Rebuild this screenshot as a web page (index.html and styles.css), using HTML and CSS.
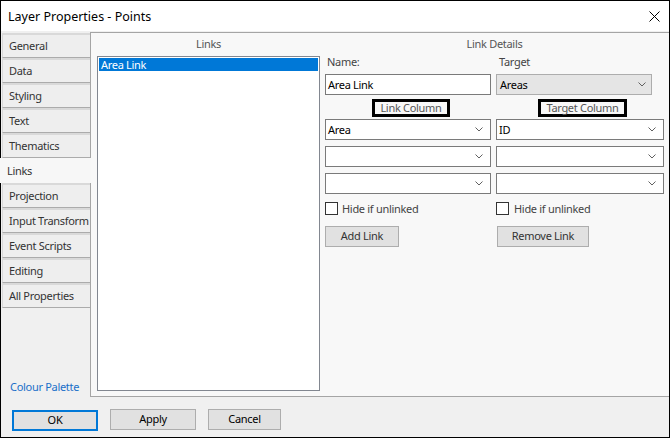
FILE: index.html
```html
<!DOCTYPE html>
<html>
<head>
<meta charset="utf-8">
<link rel="stylesheet" href="styles.css">
</head>
<body>
<div class="window">
  <div class="titlebar">
    <span class="title">Layer Properties - Points</span>
    <svg class="close" width="11" height="11" viewBox="0 0 11 11"><path d="M0.5 0.5 L10.5 10.5 M10.5 0.5 L0.5 10.5" stroke="#000" stroke-width="1" fill="none"/></svg>
  </div>
  <div class="main">
    <div class="sidebar">
      <div class="tab">General</div>
      <div class="tab">Data</div>
      <div class="tab">Styling</div>
      <div class="tab">Text</div>
      <div class="tab">Thematics</div>
      <div class="tab active">Links</div>
      <div class="tab">Projection</div>
      <div class="tab">Input Transform</div>
      <div class="tab">Event Scripts</div>
      <div class="tab">Editing</div>
      <div class="tab">All Properties</div>
      <div class="palette">Colour Palette</div>
    </div>
    <div class="panel">
      <div class="links-col">
        <div class="heading">Links</div>
        <div class="listbox">
          <div class="item selected">Area Link</div>
        </div>
      </div>
      <div class="details">
        <div class="heading">Link Details</div>
        <div class="cols">
          <div class="col">
            <div class="label name-label">Name:</div>
            <div class="textbox">Area Link</div>
            <div class="boxed link-box">Link Column</div>
            <div class="select"><span>Area</span><svg class="chev" width="8" height="5" viewBox="0 0 8 5"><path d="M0.5 0.5 L4 4 L7.5 0.5" stroke="#606060" fill="none"/></svg></div>
            <div class="select"><span></span><svg class="chev" width="8" height="5" viewBox="0 0 8 5"><path d="M0.5 0.5 L4 4 L7.5 0.5" stroke="#606060" fill="none"/></svg></div>
            <div class="select"><span></span><svg class="chev" width="8" height="5" viewBox="0 0 8 5"><path d="M0.5 0.5 L4 4 L7.5 0.5" stroke="#606060" fill="none"/></svg></div>
            <div class="check"><span class="cb"></span><span>Hide if unlinked</span></div>
            <div class="button add">Add Link</div>
          </div>
          <div class="col">
            <div class="label target-label">Target</div>
            <div class="select combo"><span>Areas</span><svg class="chev" width="8" height="5" viewBox="0 0 8 5"><path d="M0.5 0.5 L4 4 L7.5 0.5" stroke="#606060" fill="none"/></svg></div>
            <div class="boxed target-box">Target Column</div>
            <div class="select"><span>ID</span><svg class="chev" width="8" height="5" viewBox="0 0 8 5"><path d="M0.5 0.5 L4 4 L7.5 0.5" stroke="#606060" fill="none"/></svg></div>
            <div class="select"><span></span><svg class="chev" width="8" height="5" viewBox="0 0 8 5"><path d="M0.5 0.5 L4 4 L7.5 0.5" stroke="#606060" fill="none"/></svg></div>
            <div class="select"><span></span><svg class="chev" width="8" height="5" viewBox="0 0 8 5"><path d="M0.5 0.5 L4 4 L7.5 0.5" stroke="#606060" fill="none"/></svg></div>
            <div class="check"><span class="cb"></span><span>Hide if unlinked</span></div>
            <div class="button remove">Remove Link</div>
          </div>
        </div>
      </div>
    </div>
  </div>
  <div class="footer">
    <div class="button dlg ok">OK</div>
    <div class="button dlg">Apply</div>
    <div class="button dlg cancel">Cancel</div>
  </div>
</div>
</body>
</html>
```

FILE: styles.css
```css
* { box-sizing: border-box; }
html, body { margin: 0; padding: 0; }
body {
  font-family: "Noto Sans", "Open Sans", sans-serif;
  font-size: 11px;
  letter-spacing: -0.3px;
  color: #333;
  background: #fff;
}
.window {
  width: 670px;
  height: 438px;
  border: 1px solid #000;
  display: flex;
  flex-direction: column;
  background: #f0f0f0;
}
.titlebar {
  height: 30px;
  background: #fff;
  display: flex;
  align-items: center;
  padding: 0 9px 0 7px;
}
.title {
  flex: 1;
  font-size: 12.5px;
  letter-spacing: 0;
  color: #000;
  line-height: 14px;
  margin-top: 1px;
}
.close { display: block; }
.main {
  height: 366px;
  display: flex;
}
.sidebar {
  width: 89px;
  display: flex;
  flex-direction: column;
  padding-top: 2px;
}
.tab {
  height: 25px;
  margin-left: 1px;
  background: #eeeeee;
  border-top: 2px solid #d9d9d9;
  border-left: 1px solid #d9d9d9;
  border-bottom: 1px solid #ababab;
  padding-left: 6px;
  line-height: 21px;
  color: #333;
  white-space: nowrap;
}
.tab.active {
  margin-left: -1px;
  margin-right: -1px;
  background: #f7f7f7;
  border: none;
  padding-left: 7px;
  line-height: 25px;
  position: relative;
  z-index: 1;
}
.palette {
  margin-top: auto;
  margin-bottom: 3px;
  padding-left: 9px;
  line-height: 14px;
  color: #1a6fc9;
}
.panel {
  width: 579px;
  margin-top: 1px;
  background: #f8f8f8;
  border-top: 1px solid #a5a5a5;
  border-left: 1px solid #a5a5a5;
  border-bottom: 1px solid #a5a5a5;
  display: flex;
  gap: 5px;
  padding: 4px 5px 0 6px;
}
.heading {
  text-align: center;
  line-height: 14px;
  color: #555;
}
.links-col {
  width: 223px;
  display: flex;
  flex-direction: column;
}
.listbox {
  margin-top: 5px;
  height: 335px;
  background: #fff;
  border: 1px solid #828790;
  padding: 1px;
}
.item {
  height: 13px;
  line-height: 13px;
  padding-left: 2px;
  color: #000;
}
.item.selected {
  background: #0078d7;
  color: #fff;
}
.details {
  width: 339px;
  display: flex;
  flex-direction: column;
}
.cols {
  display: flex;
  gap: 5px;
}
.col {
  display: flex;
  flex-direction: column;
}
.col:first-child { width: 166px; }
.col:last-child { width: 168px; }
.label {
  margin-top: 4px;
  line-height: 14px;
  color: #444;
}
.name-label { padding-left: 2px; }
.target-label { padding-left: 3px; }
.textbox {
  margin-top: 5px;
  height: 21px;
  background: #fff;
  border: 1px solid #7a7a7a;
  padding-left: 2px;
  line-height: 19px;
  color: #000;
}
.boxed {
  align-self: center;
  margin-top: 4px;
  margin-left: 6px;
  height: 18px;
  border: 3px solid #000;
  line-height: 12px;
  text-align: center;
  color: #555;
  white-space: nowrap;
}
.link-box { width: 78px; }
.target-box { width: 89px; margin-left: 5px; }
.select {
  margin-top: 6px;
  height: 21px;
  background: #fff;
  border: 1px solid #7a7a7a;
  display: flex;
  align-items: center;
  padding: 0 7px 0 2px;
  color: #000;
}
.boxed + .select { margin-top: 2px; }
.select span { flex: 1; line-height: 19px; }
.select .chev { display: block; }
.select.combo {
  margin-top: 5px;
  width: 156px;
  background: #e5e5e5;
  border-color: #adadad;
  padding-left: 3px;
  padding-right: 5px;
}
.check {
  margin-top: 8px;
  display: flex;
  align-items: center;
  height: 13px;
  color: #444;
  line-height: 12px;
}
.cb {
  width: 13px;
  height: 13px;
  background: #fff;
  border: 1px solid #333;
  margin-right: 4px;
}
.col:last-child .cb { margin-right: 5px; }
.button {
  height: 21px;
  background: #e1e1e1;
  border: 1px solid #adadad;
  text-align: center;
  line-height: 18px;
  color: #333;
}
.add { margin-top: 11px; width: 74px; }
.remove { margin-top: 11px; width: 92px; margin-left: 1px; }
.footer {
  flex: 1;
  display: flex;
  gap: 12px;
  padding: 12px 0 0 11px;
  align-items: flex-start;
}
.dlg { width: 86px; color: #000; }
.ok {
  border: 2px solid #0078d7;
  line-height: 16px;
  margin-top: 1px;
}
.cancel { width: 73px; }
```
